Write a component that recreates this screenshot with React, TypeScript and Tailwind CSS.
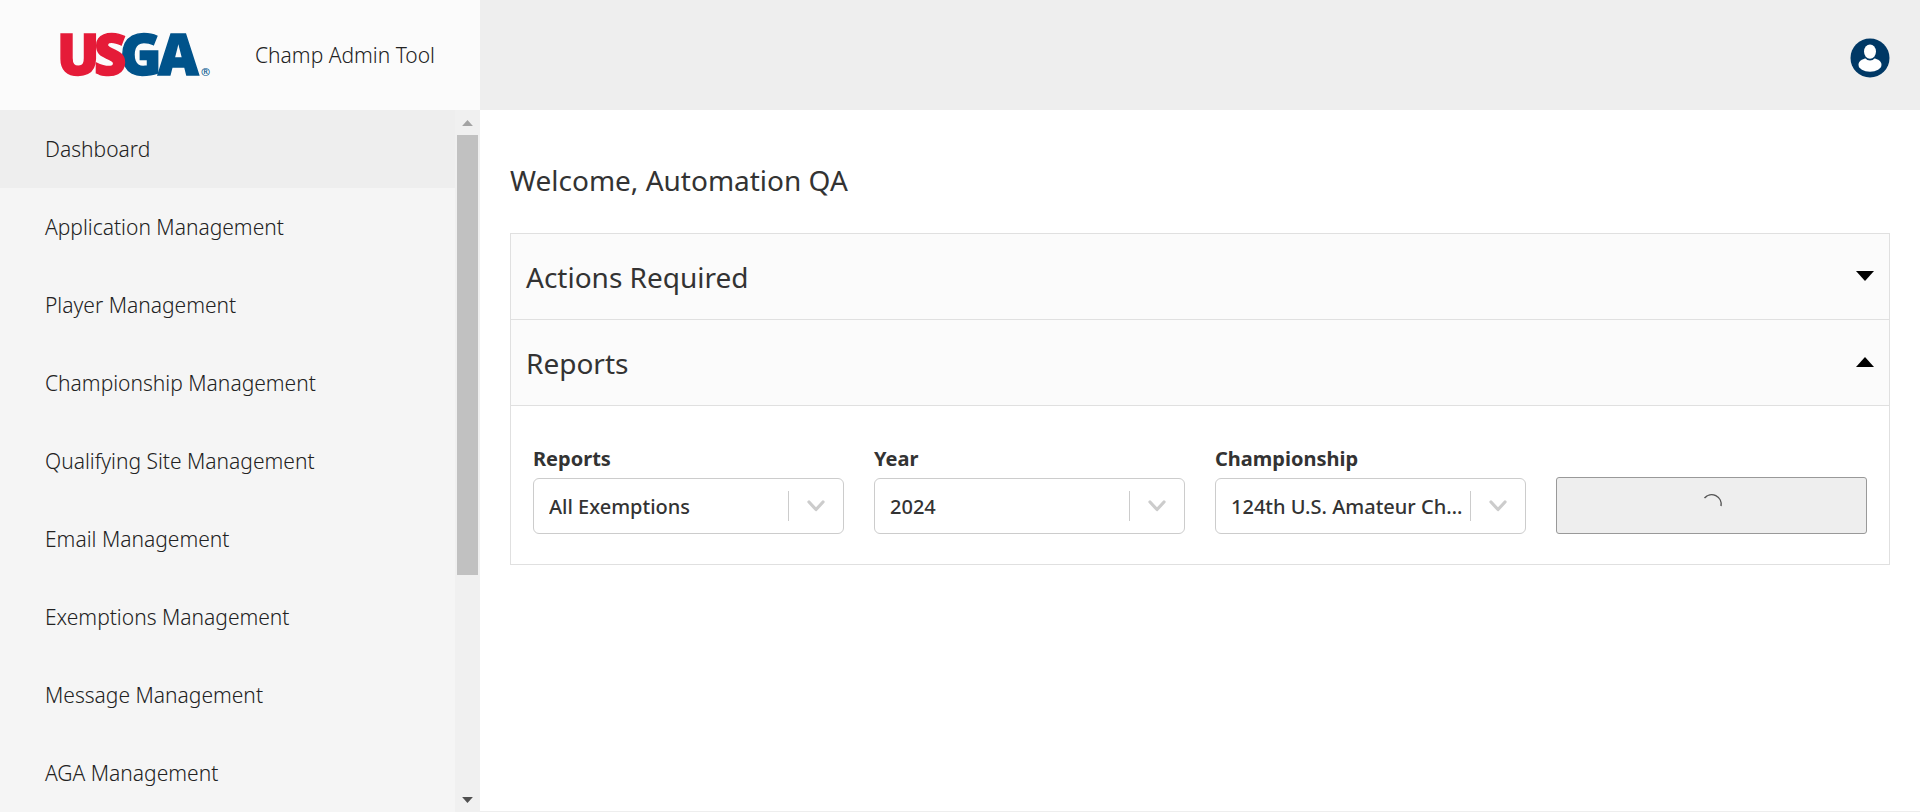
import { useState } from "react";

const navItems = [
  "Dashboard",
  "Application Management",
  "Player Management",
  "Championship Management",
  "Qualifying Site Management",
  "Email Management",
  "Exemptions Management",
  "Message Management",
  "AGA Management",
];

function Logo() {
  return (
    <svg
      width="150"
      height="80"
      viewBox="0 0 150 80"
      role="img"
      aria-label="USGA"
      className="shrink-0 overflow-visible font-['Open_Sans',sans-serif] font-extrabold"
    >
      <g fontSize="56" strokeWidth="1.5">
        <g fill="#00538b" stroke="#00538b">
          <text x="98" y="60">A</text>
          <text x="60" y="60">G</text>
        </g>
        <g fill="#e51b38" stroke="#e51b38">
          <text x="-3" y="60">U</text>
          <text x="34" y="60">S</text>
        </g>
      </g>
      <text x="141" y="61" fontSize="11" fontWeight="600" fill="#00538b">®</text>
    </svg>
  );
}

function Avatar() {
  return (
    <svg width="40" height="40" viewBox="0 0 40 40" aria-hidden="true">
      <circle cx="20" cy="20" r="19.5" fill="#003865" />
      <ellipse cx="20" cy="26.8" rx="11.5" ry="7" fill="#fff" />
      <ellipse cx="20" cy="14" rx="7" ry="8.6" fill="#003865" />
      <ellipse cx="20" cy="13.6" rx="6" ry="7.2" fill="#fff" />
    </svg>
  );
}

function Triangle({ up, className }: { up?: boolean; className: string }) {
  return (
    <svg viewBox="0 0 18 10" className={className} fill="currentColor" aria-hidden="true">
      <path d={up ? "M0 10L9 0L18 10Z" : "M0 0H18L9 10Z"} />
    </svg>
  );
}

function Section({ title, open, onToggle }: { title: string; open: boolean; onToggle: () => void }) {
  return (
    <button
      type="button"
      aria-expanded={open}
      onClick={onToggle}
      className="flex h-[86px] w-full items-center justify-between border-b border-[#e0e0e0] bg-[#fbfbfb] px-[15px] text-left text-[28px]"
    >
      <span>{title}</span>
      <Triangle up={open} className="mb-0.5 h-[10px] w-[18px] text-black" />
    </button>
  );
}

function SelectField({ id, label, value }: { id: string; label: string; value: string }) {
  return (
    <div className="flex min-w-0 flex-col gap-[5px]">
      <label htmlFor={id} className="text-[20px] leading-7 font-bold">
        {label}
      </label>
      <div className="relative">
        <select
          id={id}
          className="h-14 w-full appearance-none truncate rounded-[6px] border border-[#ccc] bg-white pt-0.5 pr-[57px] pl-[15px] text-[20px] font-medium"
        >
          <option>{value}</option>
        </select>
        <div className="pointer-events-none absolute inset-y-0 right-0 flex w-14 items-center justify-center">
          <span className="absolute left-0 h-[30px] w-px bg-[#ccc]" />
          <svg width="18" height="12" viewBox="0 0 18 12" fill="none" stroke="#ccc" strokeWidth="3.2" strokeLinecap="round" strokeLinejoin="round" aria-hidden="true">
            <path d="M2 2L9 9.5L16 2" />
          </svg>
        </div>
      </div>
    </div>
  );
}

export default function App() {
  const [actionsOpen, setActionsOpen] = useState(false);
  const [reportsOpen, setReportsOpen] = useState(true);

  return (
    <div className="flex h-screen flex-col overflow-hidden bg-white font-['Noto_Sans',sans-serif] text-[#333]">
      <header className="flex h-[110px] shrink-0 bg-[#eee]">
        <div className="flex w-[480px] shrink-0 items-center gap-[45px] bg-[#fbfbfb] pl-[60px]">
          <Logo />
          <span className="pt-0.5 text-[21px] font-light text-[#222]">Champ Admin Tool</span>
        </div>
        <div className="flex grow items-center justify-end pt-[6px] pr-[30px]">
          <button type="button" aria-label="Account">
            <Avatar />
          </button>
        </div>
      </header>

      <div className="flex min-h-0 grow">
        <aside className="flex w-[480px] shrink-0 bg-[#f5f5f5]">
          <nav className="grow overflow-hidden">
            {navItems.map((item, i) => (
              <a
                key={item}
                href="#"
                className={`flex h-[78px] items-center pt-0.5 pl-[45px] text-[21px] font-light text-[#222] ${i === 0 ? "bg-[#eee]" : ""}`}
              >
                {item}
              </a>
            ))}
          </nav>
          <div className="flex w-[25px] shrink-0 flex-col items-center bg-[#f0f0f0]">
            <span className="flex h-[25px] items-center">
              <Triangle up className="h-[6px] w-[11px] text-[#a3a3a3]" />
            </span>
            <span className="h-[440px] w-[21px] bg-[#c1c1c1]" />
            <span className="mt-auto flex h-[25px] items-center">
              <Triangle className="h-[6px] w-[11px] text-[#505050]" />
            </span>
          </div>
        </aside>

        <main className="min-w-0 grow border-b border-[#eee] px-[30px] pt-[50px]">
          <h1 className="text-[28px] leading-10">Welcome, Automation QA</h1>
          <div className="mt-[33px] border border-b-0 border-[#e0e0e0]">
            <Section title="Actions Required" open={actionsOpen} onToggle={() => setActionsOpen(!actionsOpen)} />
            <Section title="Reports" open={reportsOpen} onToggle={() => setReportsOpen(!reportsOpen)} />
            {reportsOpen && (
              <form className="grid grid-cols-4 items-end gap-[30px] border-b border-[#e0e0e0] px-[22px] pt-[39px] pb-[30px]">
                <SelectField id="report" label="Reports" value="All Exemptions" />
                <SelectField id="year" label="Year" value="2024" />
                <SelectField id="championship" label="Championship" value="124th U.S. Amateur Championship" />
                <button
                  type="button"
                  aria-label="Loading"
                  className="flex h-[57px] items-center justify-center rounded-[3px] border border-[#999] bg-[#eee] pb-1"
                >
                  <svg width="24" height="24" viewBox="0 0 24 24" fill="none" stroke="#555" strokeWidth="1.5" aria-hidden="true">
                    <path d="M4.5 6A9.5 9.5 0 0 1 21 14" />
                  </svg>
                </button>
              </form>
            )}
          </div>
        </main>
      </div>
    </div>
  );
}
